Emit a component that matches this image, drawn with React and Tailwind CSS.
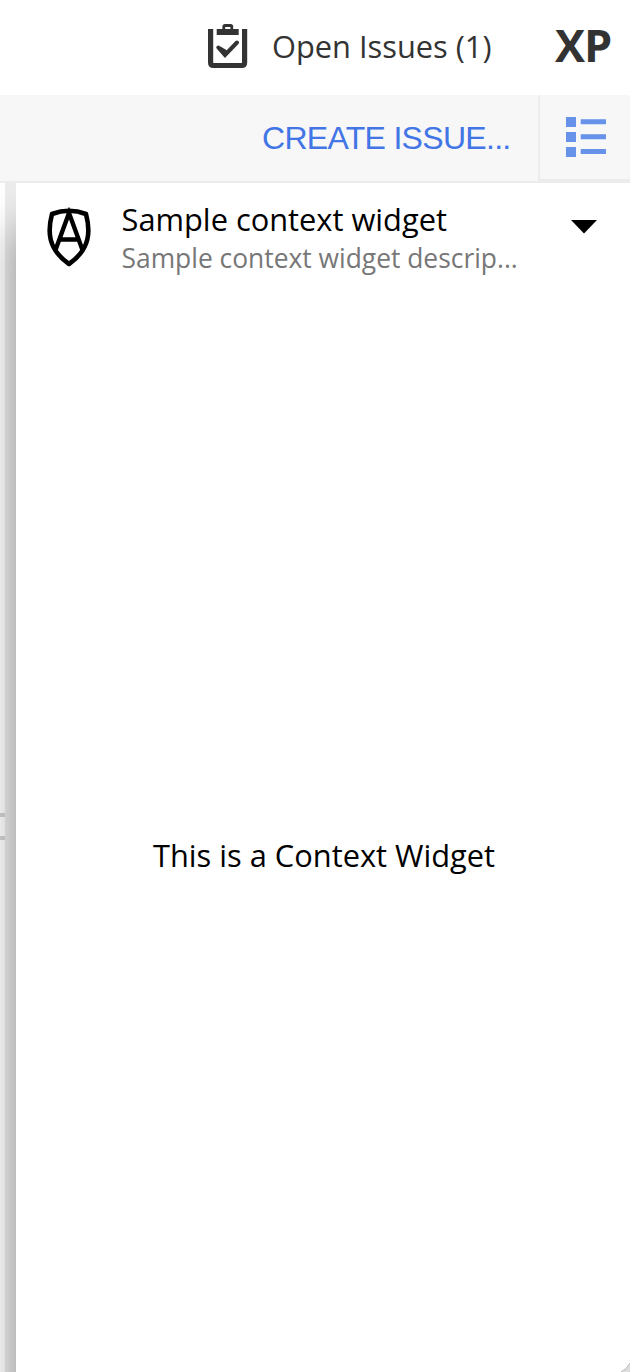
function ClipboardIcon() {
  return (
    <svg className="block h-[46px] w-10 shrink-0" viewBox="0 0 40 46" fill="none">
      <path d="M2.600 6v33.500q0 3 3 3h28q3 0 3-3V6" stroke="#333" strokeWidth="5.200" />
      <path d="M8.700 6h22v6H8.700z" fill="#333" />
      <path d="M15.800 7V3.700q0-1.200 1.200-1.200h5.600q1.200 0 1.200 1.200V7" stroke="#333" strokeWidth="2.800" />
      <path d="M10.300 24.500l6.700 7.500L29 19.500M11 25l6 3.500" stroke="#333" strokeWidth="4" strokeLinecap="round" />
    </svg>
  );
}

function ListIcon() {
  return (
    <svg className="block h-10 w-[41px]" viewBox="0 0 41 40" fill="#6693e9">
      <path d="M0 0h10v10H0zM0 15h10v10H0zM0 30h10v10H0zM14.700 2.200H40v5H14.700zM14.700 17.200H40v5H14.700zM14.700 32.100H40v5H14.700z" />
    </svg>
  );
}

function ShieldIcon() {
  return (
    <svg className="block h-[60px] w-11 shrink-0" viewBox="0 0 44 60" fill="none" stroke="#000">
      <path d="M5 7Q22 .5 39 7C43.500 24 43.500 42 22 57C.5 42 .5 24 5 7Z" strokeWidth="4.600" strokeLinejoin="round" />
      <path d="M8.500 43L22 6l13.500 37M12.500 32.500h19" strokeWidth="4.400" />
    </svg>
  );
}

export default function App() {
  return (
    <div className="flex h-[1372px] w-[630px] flex-col overflow-hidden bg-white font-['Open_Sans',sans-serif] text-black">
      <header className="flex h-[95px] shrink-0 items-start text-[#333]">
        <div className="flex pl-[208px] pt-[23px]">
          <ClipboardIcon />
          <span className="ml-6 w-[283px] whitespace-nowrap text-[30.800px] leading-[46px]">Open Issues (1)</span>
        </div>
        <span className="pt-[22px] text-[45px] font-bold leading-[46px] tracking-[-1px]">XP</span>
      </header>

      <div className="flex h-[88px] shrink-0 border-b-2 border-[#ececec] bg-[#f7f7f7]">
        <button className="h-full w-[538px] whitespace-nowrap pl-[262px] text-left font-['Liberation_Sans',sans-serif] text-[32px] leading-[86px] tracking-[-0.700px] text-[#4275e5]">
          CREATE ISSUE...
        </button>
        <button className="flex flex-1 items-start border-b-2 border-l-2 border-[#ececec] pl-[26px] pt-[21.500px]">
          <ListIcon />
        </button>
      </div>

      <main className="flex min-h-0 flex-1">
        <div className="relative flex w-4 shrink-0 overflow-hidden">
          <div className="w-[5px] bg-white pt-[630px]">
            <div className="h-[27px] w-[5px] border-y-4 border-[#d4d4d4]" />
          </div>
          <div className="w-[11px] bg-[#ececec]" />
          <div className="absolute left-4 top-0 h-[1300px] w-[614px] shadow-[0_44px_40px_rgba(0,0,0,0.4)]" />
        </div>
        <section className="relative flex min-w-0 flex-1 flex-col bg-white">
          <div className="flex h-[110px] shrink-0 items-start pl-[31px] pt-[14px]">
            <div className="pt-[10px]">
              <ShieldIcon />
            </div>
            <div className="ml-[30.500px] w-[396px] whitespace-nowrap">
              <div className="text-[30.800px] leading-[44px]">Sample context widget</div>
              <div className="text-[26.400px] leading-[34px] text-[#777]">Sample context widget descrip...</div>
            </div>
            <svg className="ml-[53.500px] mt-[22.500px] block h-[14px] w-[26px]" viewBox="0 0 26 14">
              <path d="M0 0h26L13 13.500z" />
            </svg>
          </div>
          <div className="pl-[137px] pt-[540px] text-[30.800px] leading-[44px] whitespace-nowrap">This is a Context Widget</div>
          <svg className="absolute bottom-0 right-0 h-[9px] w-[9px]" viewBox="0 0 9 9">
            <path d="M0 9Q6 6 9 0V9Z" fill="#ddd" />
            <path d="M0 9Q6 6 9 0" fill="none" stroke="#bbb" />
          </svg>
        </section>
      </main>
    </div>
  );
}
